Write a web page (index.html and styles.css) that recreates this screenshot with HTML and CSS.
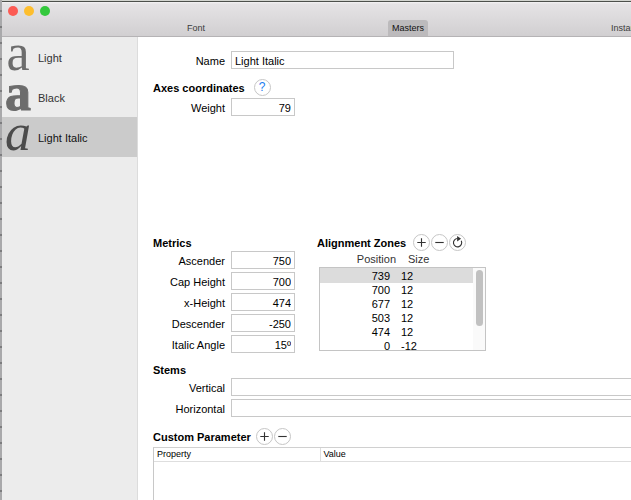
FILE: index.html
```html
<!DOCTYPE html>
<html lang="en">
<head>
  <meta charset="UTF-8">
  <meta name="viewport" content="width=device-width, initial-scale=1.0">
  <title>Font Info - Masters</title>
  <link rel="stylesheet" href="styles.css">
</head>
<body>
  <div class="window">
    <!-- Title bar and tabs -->
    <header class="titlebar">
      <div class="lights">
        <button class="light close" aria-label="Close"></button>
        <button class="light minimize" aria-label="Minimize"></button>
        <button class="light zoom" aria-label="Zoom"></button>
      </div>
      <nav class="tabs">
        <button class="tab">Font</button>
        <button class="tab active">Masters</button>
        <button class="tab">Instances</button>
      </nav>
    </header>

    <div class="content">
      <!-- Master list -->
      <aside class="sidebar">
        <button class="master"><span class="glyph">a</span>Light</button>
        <button class="master"><span class="glyph black">a</span>Black</button>
        <button class="master selected"><span class="glyph italic">a</span>Light Italic</button>
      </aside>

      <main class="details">
        <div class="row">
          <label for="name">Name</label>
          <input class="medium" type="text" id="name" value="Light Italic">
        </div>

        <section class="axes">
          <div class="heading">
            <h2>Axes coordinates</h2>
            <button class="round help" aria-label="Help">?</button>
          </div>
          <div class="row">
            <label for="weight">Weight</label>
            <input class="number" type="text" id="weight" value="79">
          </div>
        </section>

        <div class="columns">
          <section class="metrics">
            <div class="heading"><h2>Metrics</h2></div>
            <div class="rows">
              <div class="row">
                <label for="ascender">Ascender</label>
                <input class="number" type="text" id="ascender" value="750">
              </div>
              <div class="row">
                <label for="capHeight">Cap Height</label>
                <input class="number" type="text" id="capHeight" value="700">
              </div>
              <div class="row">
                <label for="xHeight">x-Height</label>
                <input class="number" type="text" id="xHeight" value="474">
              </div>
              <div class="row">
                <label for="descender">Descender</label>
                <input class="number" type="text" id="descender" value="-250">
              </div>
              <div class="row">
                <label for="angle">Italic Angle</label>
                <input class="number" type="text" id="angle" value="15º">
              </div>
            </div>
          </section>

          <section class="zones">
            <div class="heading">
              <h2>Alignment Zones</h2>
              <div class="buttons">
                <button class="round" aria-label="Add zone"><svg viewBox="0 0 16 16"><path d="M8 3.5v9M3.5 8h9"/></svg></button>
                <button class="round" aria-label="Remove zone"><svg viewBox="0 0 16 16"><path d="M3.5 8h9"/></svg></button>
                <button class="round" aria-label="Refresh zones"><svg viewBox="0 0 16 16"><path d="M12 6.2A4.4 4.4 0 1 1 8 3.8"/><path class="solid" d="M7.6 1L11.8 3.9L7.6 6.8Z"/></svg></button>
              </div>
            </div>
            <table class="zone-table">
              <thead>
                <tr><th>Position</th><th>Size</th></tr>
              </thead>
              <tbody>
                <tr class="selected"><td>739</td><td>12</td></tr>
                <tr><td>700</td><td>12</td></tr>
                <tr><td>677</td><td>12</td></tr>
                <tr><td>503</td><td>12</td></tr>
                <tr><td>474</td><td>12</td></tr>
                <tr><td>0</td><td>-12</td></tr>
              </tbody>
            </table>
            <div class="scrollbar"><div class="thumb"></div></div>
          </section>
        </div>

        <section class="stems">
          <div class="heading"><h2>Stems</h2></div>
          <div class="rows">
            <div class="row">
              <label for="vertical">Vertical</label>
              <input class="wide" type="text" id="vertical">
            </div>
            <div class="row">
              <label for="horizontal">Horizontal</label>
              <input class="wide" type="text" id="horizontal">
            </div>
          </div>
        </section>

        <section class="parameters">
          <div class="heading">
            <h2>Custom Parameter</h2>
            <div class="buttons">
              <button class="round" aria-label="Add parameter"><svg viewBox="0 0 16 16"><path d="M8 3.5v9M3.5 8h9"/></svg></button>
              <button class="round" aria-label="Remove parameter"><svg viewBox="0 0 16 16"><path d="M3.5 8h9"/></svg></button>
            </div>
          </div>
          <div class="parameter-box">
            <table class="parameter-table">
              <thead>
                <tr><th class="property">Property</th><th>Value</th></tr>
              </thead>
            </table>
          </div>
        </section>
      </main>
    </div>
  </div>
</body>
</html>
```
FILE: styles.css
```css
* {
  box-sizing: border-box;
}
body {
  margin: 0;
  height: 100vh;
  overflow: hidden;
  padding-left: 2px;
  font-family: "Liberation Sans", Arial, sans-serif;
  font-size: 11px;
  color: #000;
  /* ruler ticks of the window behind */
  background: repeating-linear-gradient(#a9a9ab 0, #a9a9ab 10px, #7c7c7e 10px, #7c7c7e 12px, #a9a9ab 12px, #a9a9ab 16px);
}
button, input {
  margin: 0;
  font: inherit;
  color: inherit;
}
button {
  border: none;
  padding: 0;
  background: none;
}
.window {
  display: flex;
  flex-direction: column;
  height: 100%;
  background: #fff;
}

/* Title bar */
.titlebar {
  display: flex;
  height: 37px;
  flex-shrink: 0;
  overflow: hidden;
  border-top: 1px solid #d3d5d0;
  border-bottom: 1px solid #b5b3b5;
  background: linear-gradient(#4d504b 1px, #f4f3f4 1px, #e5e3e5 3px, #d1cfd1);
}
.lights {
  display: flex;
  gap: 6px;
  padding: 5px 0 0 6px;
  width: 181px;
  flex-shrink: 0;
}
.light {
  width: 10px;
  height: 10px;
  border-radius: 50%;
}
.close {
  background: #fc5b54;
}
.minimize {
  background: #fdbe2e;
}
.zoom {
  background: #33c83c;
}
.tabs {
  display: flex;
  align-items: flex-end;
  gap: 179px;
}
.tab {
  height: 16px;
  padding: 0 4px;
  border-radius: 3px 3px 0 0;
  font-size: 9px;
  color: #3c3c3c;
}
.tab.active {
  background: #bcbabc;
  color: #111;
}

/* Master list */
.content {
  display: flex;
  flex: 1;
  min-height: 0;
}
.sidebar {
  width: 136px;
  flex-shrink: 0;
  border-right: 1px solid #dcdcdc;
  background: #ececec;
}
.master {
  display: flex;
  align-items: center;
  width: 100%;
  height: 40px;
  padding-top: 2px;
  color: #333;
}
.master.selected {
  background: #cbcbcb;
  color: #111;
}
.glyph {
  width: 36px;
  height: 38px;
  padding-right: 4px;
  font-family: "Liberation Serif", serif;
  font-size: 52px;
  line-height: 28px;
  text-align: center;
  color: #6c6c6c;
}
.glyph.black {
  font-weight: bold;
  -webkit-text-stroke: 1px #6c6c6c;
}
.glyph.italic {
  font-style: italic;
  color: #4c4c4c;
}

/* Details */
.details {
  flex: 1;
  min-width: 0;
  display: flex;
  flex-direction: column;
  padding: 14px 0 0 15px;
}
h2 {
  margin: 0;
  padding-top: 2px;
  font-size: 11px;
  font-weight: bold;
  white-space: nowrap;
}
.heading {
  display: flex;
  align-items: center;
  gap: 9px;
  height: 18px;
}
.rows {
  display: flex;
  flex-direction: column;
  gap: 3px;
}
.row {
  display: flex;
  align-items: center;
  gap: 6px;
}
.row label {
  width: 72px;
  flex-shrink: 0;
  padding-top: 2px;
  text-align: right;
  line-height: 16px;
}
.row input {
  height: 18px;
  border: 1px solid #c8c8c8;
  border-radius: 0;
  padding: 1px 3px 0;
  background: #fff;
}
.row .medium {
  width: 223px;
}
.row .number {
  width: 64px;
  text-align: right;
}
.row .wide {
  flex: 1;
  min-width: 0;
  border-right: none;
}
.buttons {
  display: flex;
  gap: 1px;
}
.round {
  width: 17px;
  height: 17px;
  border: 1px solid #c6c6c6;
  border-radius: 50%;
  background: #fff;
}
.round svg {
  display: block;
  width: 15px;
  height: 15px;
  fill: none;
  stroke: #333;
  stroke-width: 1.2;
}
.round .solid {
  fill: #333;
  stroke: none;
}
.help {
  font-size: 12px;
  line-height: 15px;
  color: #1a7df0;
}
.axes {
  margin-top: 9px;
}
.axes .row {
  margin-top: 2px;
}

/* Metrics and zones */
.columns {
  display: flex;
  gap: 22px;
  margin-top: 117px;
}
.zones {
  position: relative;
}
.zones .heading {
  gap: 7px;
}
.zone-table, .zone-table thead, .zone-table tbody {
  display: block;
}
.zone-table {
  width: 167px;
  margin-left: 2px;
}
.zone-table tr {
  display: grid;
  grid-template-columns: 70px 1fr;
  column-gap: 11px;
  line-height: 14px;
}
.zone-table thead tr {
  grid-template-columns: 77px 1fr;
  column-gap: 12px;
  line-height: 16px;
}
.zone-table th, .zone-table td {
  padding: 0;
  font-weight: normal;
  text-align: left;
}
.zone-table th {
  color: #333;
}
.zone-table th:first-child, .zone-table td:first-child {
  text-align: right;
}
.zone-table tbody {
  height: 84px;
  overflow: hidden;
  border: 1px solid #c4c4c4;
  padding-right: 12px;
}
.zone-table tbody .selected {
  background: #dcdcdc;
  padding-top: 1px;
}
/* scrollbar lies over the right edge of the list */
.scrollbar {
  position: absolute;
  right: 1px;
  bottom: 3px;
  width: 12px;
  height: 82px;
  padding: 2px 3px;
  background: #fafafa;
}
.thumb {
  width: 7px;
  height: 56px;
  border-radius: 4px;
  background: #c1c1c1;
}
.stems {
  margin-top: 7px;
}

/* Custom parameters */
.parameters {
  display: flex;
  flex-direction: column;
  flex: 1;
  margin-top: 10px;
}
.parameters .heading {
  gap: 5px;
}
.parameter-box {
  flex: 1;
  margin-top: 2px;
  border-top: 1px solid #d0d0d0;
  border-left: 1px solid #c8c8c8;
}
.parameter-table {
  width: 100%;
  border-collapse: collapse;
}
.parameter-table th {
  height: 13px;
  padding: 0 3px;
  border-bottom: 1px solid #dedede;
  font-size: 9px;
  font-weight: normal;
  line-height: 12px;
  text-align: left;
}
.parameter-table .property {
  width: 166px;
  border-right: 1px solid #dedede;
}
```
